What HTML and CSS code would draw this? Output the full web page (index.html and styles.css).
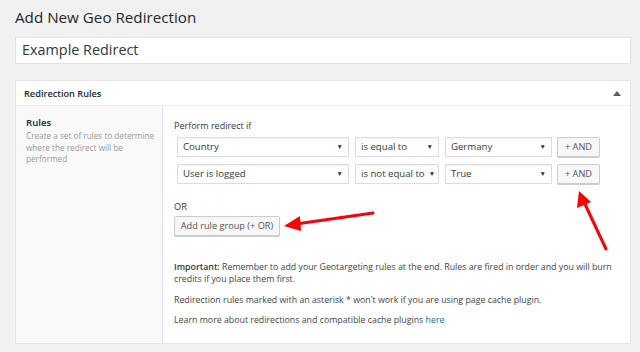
FILE: index.html
```html
<!DOCTYPE html>
<html>
<head>
<meta charset="utf-8">
<link rel="stylesheet" href="styles.css">
</head>
<body>
<div class="wrap">
  <h1 class="title">Add New Geo Redirection</h1>
  <div class="name-input">Example Redirect</div>
  <div class="panel">
    <div class="panel-head">
      <span class="panel-title">Redirection Rules</span>
      <span class="toggle"></span>
    </div>
    <div class="panel-body">
      <div class="side">
        <div class="side-title">Rules</div>
        <div class="side-desc">Create a set of rules to determine where the redirect will be performed</div>
      </div>
      <div class="main">
        <div class="label">Perform redirect if</div>
        <div class="rule-row">
          <div class="sel sel-a">Country<span class="caret">▼</span></div>
          <div class="sel sel-b">is equal to<span class="caret">▼</span></div>
          <div class="sel sel-c">Germany<span class="caret">▼</span></div>
          <div class="btn btn-and">+ AND</div>
        </div>
        <div class="rule-row">
          <div class="sel sel-a">User is logged<span class="caret">▼</span></div>
          <div class="sel sel-b">is not equal to<span class="caret">▼</span></div>
          <div class="sel sel-c">True<span class="caret">▼</span></div>
          <div class="btn btn-and">+ AND</div>
        </div>
        <div class="or">OR</div>
        <div class="btn btn-group">Add rule group (+ OR)</div>
        <p class="note"><b>Important:</b> Remember to add your Geotargeting rules at the end. Rules are fired in order and you will burn credits if you place them first.</p>
        <p class="note">Redirection rules marked with an asterisk * won't work if you are using page cache plugin.</p>
        <p class="note">Learn more about redirections and compatible cache plugins <a class="link">here</a></p>
      </div>
    </div>
  </div>
</div>
<svg class="arrows" width="640" height="352" viewBox="0 0 640 352">
  <line x1="373" y1="213" x2="296" y2="224" stroke="#f00" stroke-width="3" stroke-linecap="round"/>
  <polygon points="284,226 300,216 301,231" fill="#f00"/>
  <line x1="606" y1="249" x2="584" y2="202" stroke="#f00" stroke-width="3" stroke-linecap="round"/>
  <polygon points="579,191 577,208 591,202" fill="#f00"/>
</svg>
</body>
</html>
```
FILE: styles.css
```css
* { box-sizing: border-box; }
html, body { margin: 0; padding: 0; }
body {
  background: #f1f1f1;
  font-family: "Open Sans", "Noto Sans", sans-serif;
  color: #23282d;
  width: 640px;
  height: 352px;
  overflow: hidden;
  position: relative;
}
.wrap { padding: 6px 9px 0 15px; }
.title {
  margin: 0;
  font-weight: 400;
  font-size: 15.2px;
  line-height: 23px;
  color: #23282d;
}
.name-input {
  margin-top: 8px;
  height: 27px;
  background: #fff;
  border: 1px solid #e2e2e2;
  padding: 0 6px;
  font-size: 14.4px;
  line-height: 24px;
  color: #32373c;
}
.panel {
  margin-top: 16px;
  background: #fff;
  border: 1px solid #e5e5e5;
  height: 264px;
}
.panel-head {
  height: 25px;
  border-bottom: 1px solid #eee;
  display: flex;
  align-items: center;
  justify-content: space-between;
  padding: 0 8px 0 8px;
}
.panel-title { font-size: 9.2px; font-weight: 600; color: #23282d; }
.toggle {
  width: 0; height: 0;
  border-left: 4px solid transparent;
  border-right: 4px solid transparent;
  border-bottom: 5px solid #555d66;
  margin-right: 1px;
}
.panel-body { display: flex; height: 237px; }
.side {
  width: 147px;
  background: #f9f9f9;
  border-right: 1px solid #e1e1e1;
  padding: 10px 4px 0 10px;
}
.side-title { font-size: 9.6px; font-weight: 600; color: #23282d; line-height: 14px; }
.side-desc { font-size: 8.2px; color: #999; line-height: 11.6px; }
.main { flex: 1; padding: 13px 10px 0 11px; }
.label { font-size: 9px; color: #32373c; line-height: 14px; }
.rule-row {
  display: flex;
  gap: 6px;
  margin-left: 3px;
  margin-top: 4px;
}
.rule-row + .rule-row { margin-top: 7px; }
.sel {
  height: 20px;
  border: 1px solid #ddd;
  box-shadow: inset 0 1px 2px rgba(0,0,0,0.05);
  background: #fff;
  font-size: 9.6px;
  line-height: 18px;
  padding: 0 5px;
  color: #32373c;
  display: flex;
  justify-content: space-between;
  white-space: nowrap;
}
.caret { font-size: 6.5px; color: #333; margin-left: 4px; }
.sel-a { width: 172px; }
.sel-b { width: 84px; }
.sel-c { width: 107px; }
.btn {
  height: 20px;
  border: 1px solid #ccc;
  border-radius: 2px;
  background: #f7f7f7;
  box-shadow: 0 1px 0 #ccc;
  color: #555;
  font-size: 9.2px;
  line-height: 18px;
  text-align: center;
  white-space: nowrap;
}
.btn-and { width: 43px; margin-left: -1px; }
.or { margin-top: 16px; font-size: 9.2px; color: #32373c; line-height: 14px; }
.btn-group { width: 106px; margin-top: 2px; }
.note {
  margin: 0;
  font-size: 8.8px;
  line-height: 12.4px;
  color: #444;
}
.btn-group + .note { margin-top: 25px; }
.note + .note { margin-top: 8px; }
.note b { font-weight: 600; color: #32373c; }
.link { color: #0073aa; }
.arrows { position: absolute; left: 0; top: 0; pointer-events: none; }
```
